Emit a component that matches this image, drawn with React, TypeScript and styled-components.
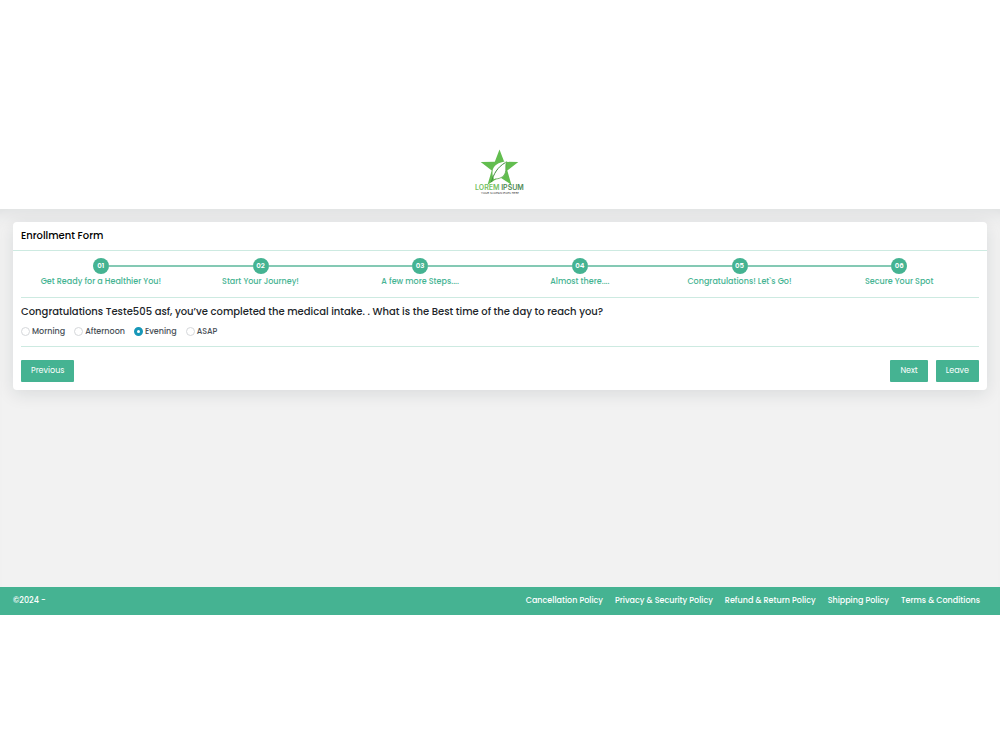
import React, { useState } from "react";
import styled, { createGlobalStyle } from "styled-components";

const green = "#45b392";
const rule = "#cdeae1";

const GlobalStyle = createGlobalStyle`
  *, *::before, *::after { box-sizing: border-box; }
  body {
    margin: 0;
    background: #fff;
    color: #212529;
    font-family: Poppins, Inter, "Open Sans", sans-serif;
    font-size: 8px;
    font-weight: 500;
  }
`;

const Page = styled.div`
  display: flex;
  flex-direction: column;
  min-height: 100vh;
  padding: 136px 0 135px;
`;

const Header = styled.header`
  display: flex;
  justify-content: center;
  padding: 12px 0;
  background: #fff;
`;

const Logo = styled.svg`
  display: block;
  width: 52px;
  height: 49px;
`;

const Main = styled.main`
  flex: 1;
  padding: 13px;
  background: #f2f2f2;
  box-shadow: inset 0 18px 18px -14px rgba(30, 50, 60, 0.1);
`;

const Card = styled.section`
  background: #fff;
  border-radius: 4px;
  box-shadow: 0 4px 18px rgba(20, 40, 50, 0.11);
`;

const CardTitle = styled.h1`
  margin: 0;
  padding: 6px 8px;
  border-bottom: 1px solid ${rule};
  color: #000;
  font-size: 10px;
  line-height: 16px;
  font-weight: 500;
`;

const CardBody = styled.div`
  padding: 7px 8px 8px;
`;

const Steps = styled.ol`
  display: grid;
  grid-template-columns: repeat(6, 1fr);
  margin: 0;
  padding: 0 0 8px;
  border-bottom: 1px solid ${rule};
  list-style: none;
`;

const Step = styled.li`
  display: flex;
  flex-direction: column;
  align-items: center;
  color: ${green};
  line-height: 15px;
  white-space: nowrap;
`;

const Track = styled.div<{ $first: boolean; $last: boolean }>`
  display: flex;
  align-items: center;
  width: 100%;

  &::before,
  &::after {
    content: "";
    flex: 1;
    height: 2px;
    background: #84c9b4;
  }
  &::before { visibility: ${(p) => (p.$first ? "hidden" : "visible")}; }
  &::after { visibility: ${(p) => (p.$last ? "hidden" : "visible")}; }
`;

const Dot = styled.span`
  width: 16px;
  height: 16px;
  border-radius: 50%;
  background: ${green};
  color: #fff;
  font-size: 7px;
  font-weight: 600;
  line-height: 16px;
  text-align: center;
`;

const Question = styled.fieldset`
  margin: 0;
  padding: 6px 0 8px;
  border: 0;
  border-bottom: 1px solid ${rule};
`;

const Legend = styled.legend`
  float: left;
  width: 100%;
  padding: 0;
  font-size: 10px;
  line-height: 16px;
`;

const Options = styled.div`
  clear: both;
  display: flex;
  gap: 9px;
  padding-top: 5px;
`;

const Option = styled.label`
  display: flex;
  align-items: center;
  gap: 2px;
  line-height: 13px;
  color: #495057;
`;

const Radio = styled.input`
  appearance: none;
  width: 9px;
  height: 9px;
  margin: 0;
  border: 1px solid #d5d7da;
  border-radius: 50%;
  background: #fff;

  &:checked {
    border: 3px solid #1797b8;
  }
`;

const Actions = styled.div`
  display: flex;
  gap: 8px;
  padding-top: 13px;
`;

const Button = styled.button<{ $push?: boolean }>`
  margin: 0 0 0 ${(p) => (p.$push ? "auto" : "0")};
  padding: 0 10px;
  border: 0;
  border-radius: 1px;
  background: ${green};
  color: #fff;
  font: inherit;
  font-weight: 400;
  line-height: 22px;
`;

const Footer = styled.footer`
  display: flex;
  justify-content: space-between;
  align-items: center;
  padding: 0 20px 0 13px;
  background: ${green};
  color: #fff;
  line-height: 28px;
`;

const FooterNav = styled.nav`
  display: flex;
  gap: 12px;
`;

const FooterLink = styled.a`
  color: inherit;
  text-decoration: none;
`;

const steps = [
  "Get Ready for a Healthier You!",
  "Start Your Journey!",
  "A few more Steps....",
  "Almost there....",
  "Congratulations! Let`s Go!",
  "Secure Your Spot",
];
const times = ["Morning", "Afternoon", "Evening", "ASAP"];
const links = [
  "Cancellation Policy",
  "Privacy & Security Policy",
  "Refund & Return Policy",
  "Shipping Policy",
  "Terms & Conditions",
];

function Brand() {
  return (
    <Logo viewBox="0 0 52 49" role="img" aria-label="Lorem Ipsum">
      <path d="M25.500 1.500l4.700 12.300 14.100.2-11 8.600 4.100 14.200L25.500 28.900 13.600 36.800l4.100-14.200L6.700 14l14.100-.2z" fill="#62bd4f" />
      <path d="M32.500 13.500c-8 .5-13.500 4-14 10-.2 3.500.5 6 1.500 7.500 7 .5 11.500-3 11.800-8.500.1-3.500-.3-6 .7-9z" fill="#fff" />
      <path d="M32.500 13.500c-1 3-.4 5.500-.7 9-.5 5-4.500 8.500-11 8.500" fill="none" stroke="#57a34a" strokeWidth="0.800" />
      <path d="M17.500 34c2-8 6-15 14-19.500" fill="none" stroke="#3f8c40" strokeWidth="1" />
      <text x="1" y="42" fontFamily="Inter, sans-serif" fontSize="7" fontWeight="600" fill="#74c162">
        LOREM <tspan fill="#4f8a55">IPSUM</tspan>
      </text>
      <text x="26" y="46" textAnchor="middle" fontFamily="Poppins, Inter, sans-serif" fontSize="3" fontWeight="500" fill="#666">
        YOUR SLOGAN GOES HERE
      </text>
    </Logo>
  );
}

export default function App() {
  const [time, setTime] = useState("Evening");
  return (
    <>
      <GlobalStyle />
      <Page>
        <Header>
          <Brand />
        </Header>
        <Main>
          <Card>
            <CardTitle>Enrollment Form</CardTitle>
            <CardBody>
              <Steps>
                {steps.map((label, i) => (
                  <Step key={label}>
                    <Track $first={i === 0} $last={i === steps.length - 1}>
                      <Dot>{`0${i + 1}`}</Dot>
                    </Track>
                    {label}
                  </Step>
                ))}
              </Steps>
              <Question>
                <Legend>
                  Congratulations Teste505 asf, you’ve completed the medical intake. . What is the Best time of the day
                  to reach you?
                </Legend>
                <Options>
                  {times.map((t) => (
                    <Option key={t}>
                      <Radio type="radio" name="time" value={t} checked={time === t} onChange={() => setTime(t)} />
                      {t}
                    </Option>
                  ))}
                </Options>
              </Question>
              <Actions>
                <Button type="button">Previous</Button>
                <Button type="button" $push>
                  Next
                </Button>
                <Button type="button">Leave</Button>
              </Actions>
            </CardBody>
          </Card>
        </Main>
        <Footer>
          <span>©2024 -</span>
          <FooterNav>
            {links.map((l) => (
              <FooterLink key={l} href="#">
                {l}
              </FooterLink>
            ))}
          </FooterNav>
        </Footer>
      </Page>
    </>
  );
}
